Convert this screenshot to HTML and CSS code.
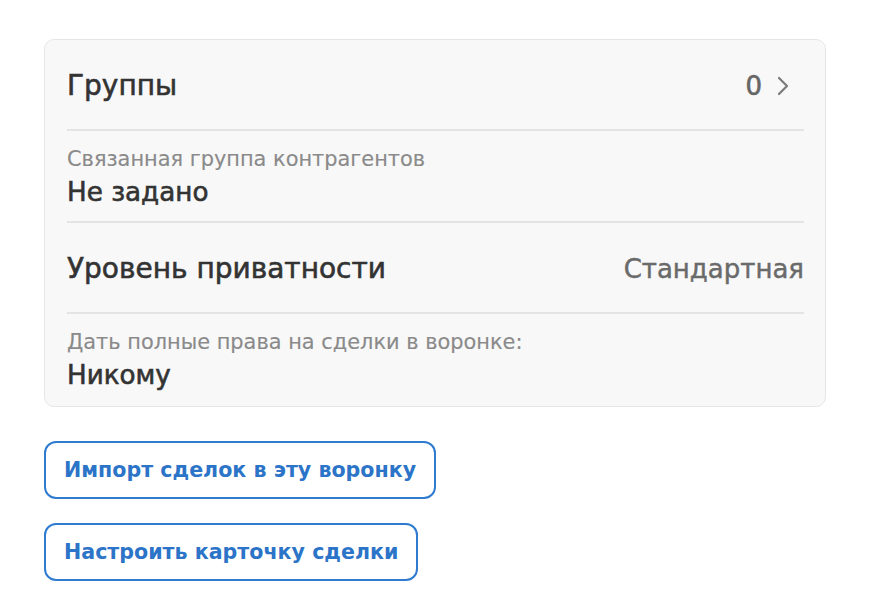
FILE: index.html
```html
<!DOCTYPE html>
<html lang="ru">
<head>
<meta charset="utf-8">
<link rel="stylesheet" href="styles.css">
</head>
<body>
<div class="page">
  <div class="card">
    <div class="row row-main">
      <span class="title">Группы</span>
      <span class="side">
        <span class="count">0</span>
        <svg class="chev" width="14" height="22" viewBox="0 0 14 22"><path d="M3 3 L11 11 L3 19" fill="none" stroke="#7a7a7a" stroke-width="2.2" stroke-linecap="round" stroke-linejoin="round"/></svg>
      </span>
    </div>
    <div class="row row-sub">
      <div class="label">Связанная группа контрагентов</div>
      <div class="value">Не задано</div>
    </div>
    <div class="row row-main">
      <span class="title">Уровень приватности</span>
      <span class="side-text">Стандартная</span>
    </div>
    <div class="row row-sub last">
      <div class="label">Дать полные права на сделки в воронке:</div>
      <div class="value">Никому</div>
    </div>
  </div>
  <div class="actions">
    <button class="btn">Импорт сделок в эту воронку</button>
    <button class="btn">Настроить карточку сделки</button>
  </div>
</div>
</body>
</html>
```

FILE: styles.css
```css
* { box-sizing: border-box; }
html, body { margin: 0; padding: 0; background: #ffffff; }
body { font-family: "DejaVu Sans", "Noto Sans", sans-serif; color: #333333; }
.page { padding: 39px 44px 0 44px; width: 826px; }
.card {
  width: 782px;
  background: #f8f8f8;
  border: 1px solid #e6e6e6;
  border-radius: 10px;
  padding: 0 21px 0 22px;
}
.row { border-bottom: 2px solid #e4e4e4; }
.row.last { border-bottom: none; }
.row-main {
  height: 91px;
  display: flex;
  align-items: center;
  justify-content: space-between;
  padding-top: 2px;
}
.row-sub { height: 92px; padding-top: 16px; }
.title { font-size: 28px; color: #333; -webkit-text-stroke: 0.6px #333; }
.side { display: flex; align-items: center; gap: 14px; margin-right: 14px; }
.count { font-size: 26px; color: #666; -webkit-text-stroke: 0.6px #666; }
.side-text { font-size: 26px; color: #6a6a6a; -webkit-text-stroke: 0.45px #6a6a6a; }
.label { font-size: 20.9px; color: #8a8a8a; line-height: 25px; -webkit-text-stroke: 0.15px #8a8a8a; }
.value { font-size: 26.2px; color: #333; line-height: 34px; margin-top: 3px; -webkit-text-stroke: 0.6px #333; }
.actions { display: flex; flex-direction: column; align-items: flex-start; gap: 24px; margin-top: 34px; }
.btn {
  font-family: inherit;
  height: 58px;
  padding: 0 18px;
  background: #ffffff;
  border: 2px solid #2f7bd0;
  border-radius: 12px;
  color: #2c74c8;
  font-size: 20.6px;
  font-weight: 700;
}
```
